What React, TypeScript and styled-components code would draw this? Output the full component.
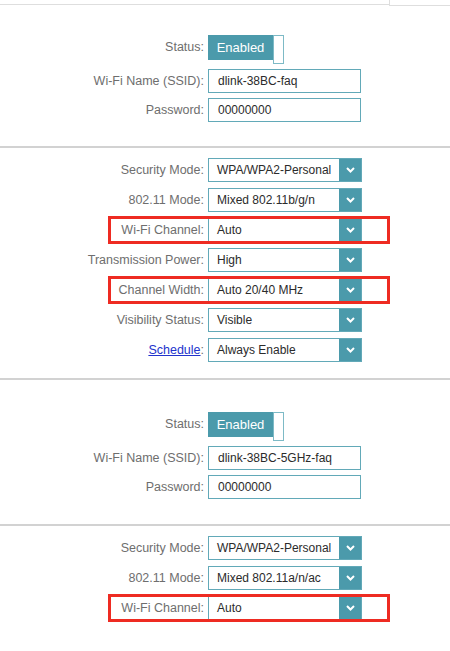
import React from "react";
import styled, { createGlobalStyle, css } from "styled-components";

const Global = createGlobalStyle`
  html, body { margin: 0; padding: 0; background: #ffffff; }
  body { font-family: "Liberation Sans", Arial, sans-serif; }
`;

const TEAL = "#4b9aab";
const TEAL_BORDER = "#62a9b8";

const Page = styled.div`
  width: 450px;
  background: #fff;
`;

const TopEdge = styled.div`
  display: flex;
  height: 6px;
`;

const TopLeft = styled.div`
  width: 389px;
  height: 4px;
  border-bottom: 1px solid #dedede;
`;

const TopRight = styled.div`
  flex: 1;
  height: 5px;
  border-left: 1px solid #dedede;
  border-bottom: 1px solid #dedede;
`;

const Section = styled.div<{ $top: number; $bottom: number; $gap: number }>`
  display: flex;
  flex-direction: column;
  gap: ${(p) => p.$gap}px;
  padding-top: ${(p) => p.$top}px;
  padding-bottom: ${(p) => p.$bottom}px;
`;

const Divider = styled.div`
  height: 2px;
  background: #d2d2d2;
`;

const Row = styled.div<{ $mark?: boolean }>`
  position: relative;
  display: grid;
  grid-template-columns: 204px 154px;
  column-gap: 4px;
  align-items: center;
  ${(p) =>
    p.$mark &&
    css`
      &::after {
        content: "";
        position: absolute;
        left: 108px;
        width: 282px;
        top: -2px;
        bottom: -2px;
        box-sizing: border-box;
        border: 3px solid #ee2b22;
        pointer-events: none;
      }
    `}
`;

const Label = styled.div`
  text-align: right;
  font-size: 12.5px;
  color: #6e6e6e;
  white-space: nowrap;
`;

const LinkText = styled.a`
  color: #2233cc;
  text-decoration: underline;
  cursor: pointer;
`;

const Toggle = styled.div`
  display: flex;
  align-items: flex-start;
  height: 29px;
`;

const ToggleOn = styled.div`
  width: 65px;
  height: 25px;
  background: ${TEAL};
  color: #fff;
  font-size: 13px;
  display: flex;
  align-items: center;
  justify-content: center;
`;

const ToggleKnob = styled.div`
  width: 9px;
  height: 27px;
  border: 1px solid #7dbac6;
  background: #fff;
`;

const TextInput = styled.div`
  box-sizing: border-box;
  width: 153px;
  height: 24px;
  border: 1px solid ${TEAL_BORDER};
  padding-left: 9px;
  font-size: 12px;
  color: #2b2b2b;
  display: flex;
  align-items: center;
`;

const Select = styled.div`
  box-sizing: border-box;
  width: 154px;
  height: 24px;
  border: 1px solid ${TEAL_BORDER};
  display: flex;
  align-items: stretch;
`;

const SelectValue = styled.div`
  flex: 1;
  padding-left: 8px;
  font-size: 12px;
  color: #2b2b2b;
  display: flex;
  align-items: center;
  white-space: nowrap;
  overflow: hidden;
`;

const SelectButton = styled.div`
  width: 22px;
  background: ${TEAL};
  display: flex;
  align-items: center;
  justify-content: center;
`;

const Chevron = () => (
  <svg width="9" height="6" viewBox="0 0 9 6">
    <polyline points="1,1 4.5,4.5 8,1" fill="none" stroke="#fff" strokeWidth="2" />
  </svg>
);

const SelectRow = ({ label, value, mark }: { label: React.ReactNode; value: string; mark?: boolean }) => (
  <Row $mark={mark}>
    <Label>{label}</Label>
    <Select>
      <SelectValue>{value}</SelectValue>
      <SelectButton>
        <Chevron />
      </SelectButton>
    </Select>
  </Row>
);

const InputRow = ({ label, value }: { label: string; value: string }) => (
  <Row>
    <Label>{label}</Label>
    <TextInput>{value}</TextInput>
  </Row>
);

const StatusLabel = styled(Label)`
  align-self: start;
  line-height: 25px;
`;

const StatusRow = () => (
  <Row>
    <StatusLabel>Status:</StatusLabel>
    <Toggle>
      <ToggleOn>Enabled</ToggleOn>
      <ToggleKnob />
    </Toggle>
  </Row>
);

export default function App() {
  return (
    <Page>
      <Global />
      <TopEdge>
        <TopLeft />
        <TopRight />
      </TopEdge>
      <Section $top={29} $bottom={24} $gap={5}>
        <StatusRow />
        <InputRow label="Wi-Fi Name (SSID):" value="dlink-38BC-faq" />
        <InputRow label="Password:" value="00000000" />
      </Section>
      <Divider />
      <Section $top={10} $bottom={16} $gap={6}>
        <SelectRow label="Security Mode:" value="WPA/WPA2-Personal" />
        <SelectRow label="802.11 Mode:" value="Mixed 802.11b/g/n" />
        <SelectRow label="Wi-Fi Channel:" value="Auto" mark />
        <SelectRow label="Transmission Power:" value="High" />
        <SelectRow label="Channel Width:" value="Auto 20/40 MHz" mark />
        <SelectRow label="Visibility Status:" value="Visible" />
        <SelectRow
          label={
            <>
              <LinkText>Schedule</LinkText>:
            </>
          }
          value="Always Enable"
        />
      </Section>
      <Divider />
      <Section $top={32} $bottom={25} $gap={5}>
        <StatusRow />
        <InputRow label="Wi-Fi Name (SSID):" value="dlink-38BC-5GHz-faq" />
        <InputRow label="Password:" value="00000000" />
      </Section>
      <Divider />
      <Section $top={10} $bottom={20} $gap={6}>
        <SelectRow label="Security Mode:" value="WPA/WPA2-Personal" />
        <SelectRow label="802.11 Mode:" value="Mixed 802.11a/n/ac" />
        <SelectRow label="Wi-Fi Channel:" value="Auto" mark />
      </Section>
    </Page>
  );
}
